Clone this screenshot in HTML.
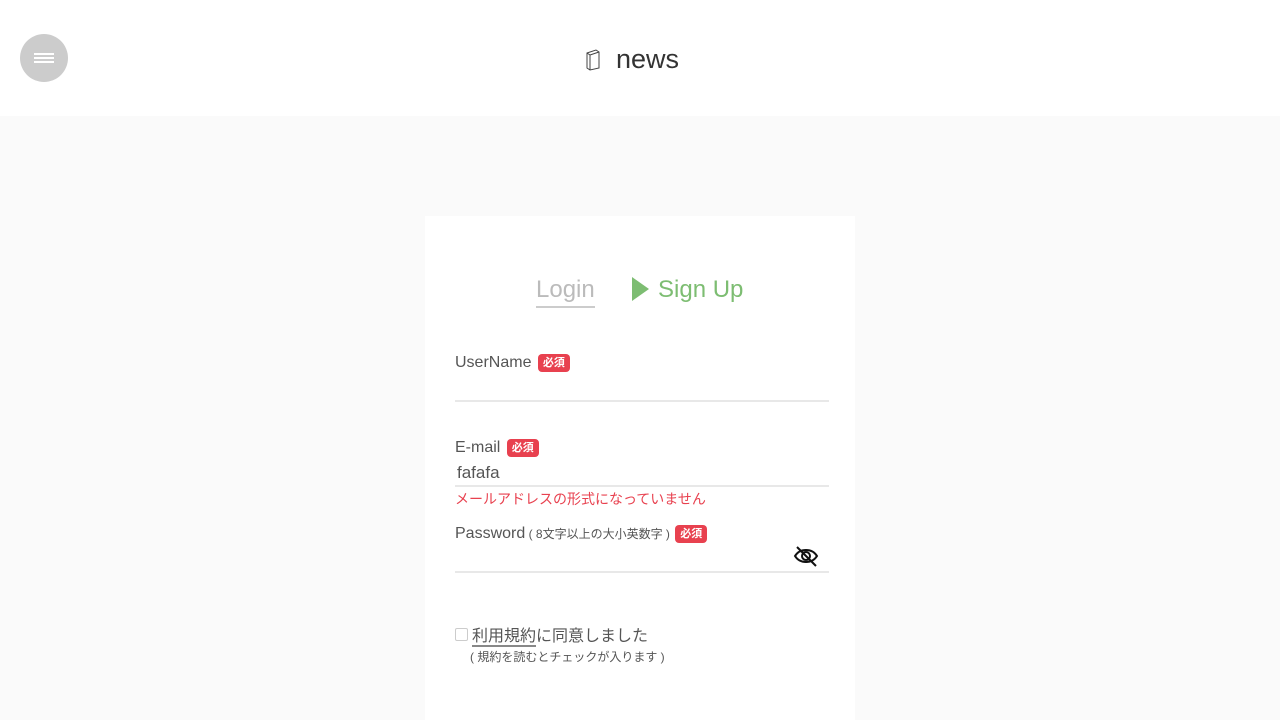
<!DOCTYPE html>
<html><head><meta charset="utf-8"><style>
body{margin:0;width:1280px;height:720px;overflow:hidden;background:#fafafa;font-family:"Liberation Sans","Noto Sans CJK JP",sans-serif;color:#555}
.hdr{position:absolute;left:0;top:0;width:1280px;height:116px;background:#fff}
.menu{position:absolute;left:20px;top:34px;width:48px;height:48px;border-radius:50%;background:#ccc}
.menu i{position:absolute;left:14px;width:20px;height:2px;background:#fff}
.logo{position:absolute;left:584px;top:44px;font-size:27px;color:#333}
.card{position:absolute;left:425px;top:216px;width:430px;height:504px;background:#fff}
.abs{position:absolute;white-space:nowrap}
.req{display:inline-block;background:#e8414f;color:#fff;font-size:11px;font-weight:bold;padding:1px 5px;border-radius:4px;vertical-align:1px;line-height:16px;margin-left:2px}
.line{position:absolute;left:30px;width:374px;height:2px;background:#e8e8e8}
.lbl{font-size:16px;color:#555}
</style></head><body>
<div class="hdr">
<div class="menu"><i style="top:19px"></i><i style="top:23px"></i><i style="top:27px"></i></div>
<div class="logo"><svg width="18" height="24" viewBox="0 0 18 24" style="vertical-align:-3px;margin-right:14px"><path d="M3 6 L12 3 L15 5 L15 21 L6 23 L3 21 Z M3 6 L6 8 L6 23 M6 8 L15 5" fill="none" stroke="#444" stroke-width="1"/></svg>news</div>
</div>
<div class="card">
<div class="abs" style="left:111px;top:57px;font-size:24px;color:#bbb;border-bottom:2px solid #ccc;line-height:33px">Login</div>
<svg class="abs" style="left:207px;top:61px" width="18" height="24"><path d="M0 0 L17 12 L0 24Z" fill="#7dbd72"/></svg>
<div class="abs" style="left:233px;top:57px;font-size:24px;color:#7dbd72;line-height:33px">Sign Up</div>
<div class="abs lbl" style="left:30px;top:138px">UserName <span class="req">必須</span></div>
<div class="line" style="top:184px"></div>
<div class="abs lbl" style="left:30px;top:223px">E-mail <span class="req">必須</span></div>
<div class="abs" style="left:32px;top:247px;font-size:17px;color:#555">fafafa</div>
<div class="line" style="top:269px"></div>
<div class="abs" style="left:30px;top:273px;font-size:14px;color:#e8414f">メールアドレスの形式になっていません</div>
<div class="abs lbl" style="left:30px;top:309px">Password<span style="font-size:12px"> ( 8文字以上の大小英数字 ) </span><span class="req">必須</span></div>
<svg class="abs" style="left:368px;top:329px" width="26" height="22" viewBox="0 0 26 22"><path d="M2 11 C7 3 19 3 24 11 C19 19 7 19 2 11Z" fill="none" stroke="#111" stroke-width="2"/><circle cx="13" cy="11" r="4" fill="none" stroke="#111" stroke-width="2"/><path d="M4 2 L23 21" stroke="#111" stroke-width="2"/></svg>
<div class="line" style="top:355px"></div>
<div class="abs" style="left:30px;top:412px;width:11px;height:11px;border:1px solid #ccc;border-radius:2px"></div>
<div class="abs" style="left:47px;top:406px;font-size:16px;color:#555"><span style="border-bottom:2px solid #888">利用規約</span>に同意しました</div>
<div class="abs" style="left:45px;top:432px;font-size:12px;color:#555">( 規約を読むとチェックが入ります )</div>
</div>
</body></html>
